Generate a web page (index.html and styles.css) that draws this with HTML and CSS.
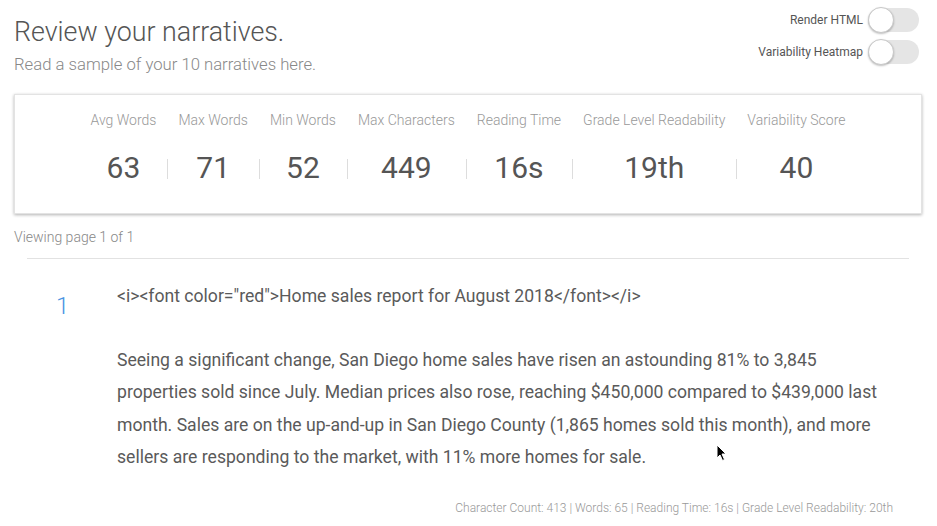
FILE: index.html
```html
<!DOCTYPE html>
<html>
<head>
<meta charset="utf-8">
<link rel="stylesheet" href="styles.css">
</head>
<body>
<div class="page">
  <header class="header">
    <div class="titles">
      <h1 class="title">Review your narratives.</h1>
      <p class="subtitle">Read a sample of your 10 narratives here.</p>
    </div>
    <div class="toggles">
      <label class="toggle-row"><span>Render HTML</span><span class="switch"><span class="knob"></span></span></label>
      <label class="toggle-row"><span>Variability Heatmap</span><span class="switch"><span class="knob"></span></span></label>
    </div>
  </header>

  <section class="card">
    <div class="stats">
      <div class="stat"><div class="label">Avg Words</div><div class="value">63</div></div>
      <div class="stat"><div class="label">Max Words</div><div class="value sep">71</div></div>
      <div class="stat"><div class="label">Min Words</div><div class="value sep">52</div></div>
      <div class="stat"><div class="label">Max Characters</div><div class="value sep">449</div></div>
      <div class="stat"><div class="label">Reading Time</div><div class="value sep">16s</div></div>
      <div class="stat"><div class="label">Grade Level Readability</div><div class="value sep">19th</div></div>
      <div class="stat"><div class="label">Variability Score</div><div class="value sep">40</div></div>
    </div>
  </section>

  <div class="paging">Viewing page 1 of 1</div>
  <hr class="rule">

  <article class="narrative">
    <div class="num">1</div>
    <div class="body">
      <p class="headline">&lt;i&gt;&lt;font color="red"&gt;Home sales report for August 2018&lt;/font&gt;&lt;/i&gt;</p>
      <p class="text">Seeing a significant change, San Diego home sales have risen an astounding 81% to 3,845 properties sold since July. Median prices also rose, reaching $450,000 compared to $439,000 last month. Sales are on the up-and-up in San Diego County (1,865 homes sold this month), and more sellers are responding to the market, with 11% more homes for sale.</p>
    </div>
  </article>
  <div class="meta">Character Count: 413 | Words: 65 | Reading Time: 16s | Grade Level Readability: 20th</div>
</div>
<svg class="cursor" width="12" height="18" viewBox="0 0 12 18"><path d="M1 1 L1 14 L4 11 L6.5 16.5 L8.5 15.5 L6 10 L10 10 Z" fill="#000" stroke="#fff" stroke-width="1"/></svg>
</body>
</html>
```

FILE: styles.css
```css
* { box-sizing: border-box; }
html, body { margin: 0; padding: 0; background: #fff; }
body {
  font-family: Roboto, "Liberation Sans", sans-serif;
  color: #555;
  width: 937px;
  height: 526px;
  overflow: hidden;
  position: relative;
}
.page { padding: 0 15px 0 14px; }

.header { display: flex; justify-content: space-between; align-items: flex-start; }
.title {
  margin: 15px 0 0;
  font-size: 26.8px;
  font-weight: 300;
  line-height: 34px;
  color: #555;
}
.subtitle {
  margin: 6px 0 0;
  font-size: 16.7px;
  font-weight: 300;
  line-height: 20px;
  color: #888;
}
.toggles {
  display: flex;
  flex-direction: column;
  align-items: flex-end;
  gap: 6px;
  padding-top: 7px;
  margin-right: 3px;
}
.toggle-row {
  display: flex;
  align-items: center;
  gap: 5px;
  font-size: 12px;
  color: #555;
  height: 26px;
}
.switch {
  display: block;
  width: 51px;
  height: 24px;
  border-radius: 12px;
  background: #e5e5e5;
  position: relative;
}
.knob {
  position: absolute;
  left: 0;
  top: -1px;
  width: 26px;
  height: 26px;
  border-radius: 50%;
  background: #fff;
  border: 1px solid #c8c8c8;
  box-shadow: 0 1px 2px rgba(0,0,0,0.25);
}

.card {
  margin-top: 19px;
  height: 120px;
  background: #fff;
  border: 1px solid #e3e3e3;
  box-shadow: 0 1px 3px rgba(0,0,0,0.3);
  padding-top: 15px;
}
.stats { display: flex; justify-content: center; }
.stat { display: flex; flex-direction: column; align-items: stretch; }
.label {
  padding: 0 11px;
  font-size: 14px;
  font-weight: 300;
  line-height: 20px;
  color: #999;
  text-align: center;
  white-space: nowrap;
}
.value {
  margin-top: 20px;
  font-size: 30px;
  font-weight: 400;
  line-height: 36px;
  color: #555;
  text-align: center;
}
.value.sep {
  background: linear-gradient(#ddd, #ddd) left 9px / 1px 20px no-repeat;
}

.paging {
  margin-top: 13px;
  font-size: 14px;
  font-weight: 300;
  line-height: 20px;
  color: #888;
}
.rule {
  margin: 11px 13px 0;
  border: 0;
  border-top: 1px solid #e2e2e2;
  height: 0;
}
.narrative { display: flex; padding-top: 24px; }
.num {
  width: 103px;
  padding-left: 42px;
  padding-top: 10px;
  font-size: 24px;
  font-weight: 300;
  line-height: 26px;
  color: #4a94e2;
}
.body { flex: 1; padding-right: 28px; }
.headline {
  margin: 0;
  font-size: 17.6px;
  line-height: 26px;
  color: #5a5a5a;
}
.text {
  margin: 35px 0 0;
  font-size: 17.6px;
  line-height: 32.4px;
  color: #5a5a5a;
}
.meta {
  margin-top: 27px;
  padding-right: 29px;
  text-align: right;
  font-size: 12px;
  font-weight: 300;
  color: #999;
}
.cursor { position: absolute; left: 716px; top: 444px; }
```
